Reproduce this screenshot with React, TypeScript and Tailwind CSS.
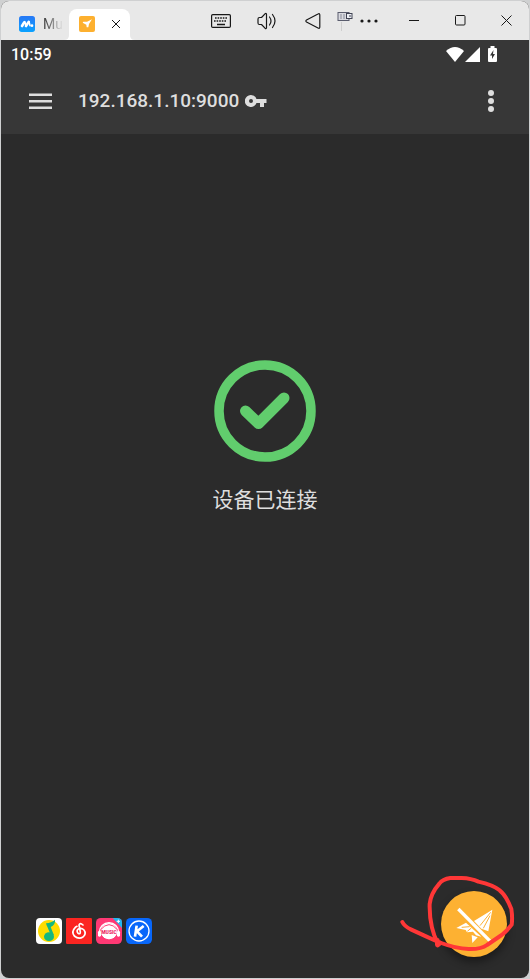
import React from "react";

function MumuLogo() {
  return (
    <svg viewBox="0 0 48 48" className="size-4 shrink-0" aria-hidden="true">
      <defs>
        <linearGradient id="mumu" x1="0" y1="0" x2="0" y2="1">
          <stop offset="0" stopColor="#2878f5" />
          <stop offset="1" stopColor="#0aa2ff" />
        </linearGradient>
      </defs>
      <rect width="48" height="48" rx="8" fill="url(#mumu)" />
      <path d="M9 30 16 19M21 30 29 18" stroke="white" strokeWidth="8" strokeLinecap="round" fill="none" />
      <path d="M17 17 21 28M30 17 33 29" stroke="white" strokeWidth="5" strokeLinecap="round" />
      <circle cx="39" cy="29" r="4" fill="white" />
    </svg>
  );
}

function PlaneLogo() {
  return (
    <svg viewBox="0 0 48 48" className="size-4 shrink-0" aria-hidden="true">
      <rect width="48" height="48" rx="6" fill="#fdb02f" />
      <path d="M39 10 30 24 28 34 23 34 22 26 11 20 13 17 24 17Z" fill="white" />
    </svg>
  );
}

function TitleBar() {
  return (
    <header className="flex h-[39px] shrink-0 items-center bg-[#e8e8e8] text-[#181818]">
      <div className="flex h-full w-[68px] shrink-0 items-center gap-2 pt-[7px] pl-[18px]">
        <MumuLogo />
        <span className="w-5 overflow-hidden bg-linear-to-r from-[#333] to-[#e8e8e8] bg-clip-text text-sm text-transparent">Mu</span>
      </div>
      <div className="relative flex h-[31px] w-[61px] shrink-0 items-center justify-between self-end rounded-t-lg bg-white pr-[9px] pb-[2px] pl-[10px]">
        <svg viewBox="0 0 5 5" className="absolute bottom-0 -left-[5px] size-[5px]" aria-hidden="true"><path d="M5 0V5H0Q5 5 5 0" fill="white" /></svg>
        <svg viewBox="0 0 5 5" className="absolute -right-[5px] bottom-0 size-[5px]" aria-hidden="true"><path d="M0 0V5H5Q0 5 0 0" fill="white" /></svg>
        <PlaneLogo />
        <button type="button" aria-label="关闭标签" className="flex">
          <svg viewBox="0 0 10 10" className="size-[10px]" stroke="currentColor"><path d="M1 1 9 9M9 1 1 9" /></svg>
        </button>
      </div>
      <div className="ml-auto flex h-full items-center">
        <button type="button" aria-label="键盘" className="flex w-[46px] justify-center">
          <svg viewBox="0 0 20 14" className="h-[14px] w-5" fill="none" stroke="currentColor">
            <rect x=".6" y=".6" width="18.8" height="12.8" rx="1.2" strokeWidth="1.2" />
            <path d="M4 4H17M3 7H16" strokeWidth="1.6" strokeDasharray="1.6 1" />
            <path d="M6 10.5H14" strokeWidth="1.3" />
          </svg>
        </button>
        <button type="button" aria-label="音量" className="flex w-[46px] justify-center">
          <svg viewBox="0 0 20 18" className="h-[18px] w-5" fill="none" stroke="currentColor" strokeWidth="1.2" strokeLinejoin="round" strokeLinecap="round">
            <path d="M2.5 5.5H4.5L8 1.8Q9.5.7 9.5 2.5V15.5Q9.5 17.3 8 16.2L4.5 12.5H2.5Q1 12.5 1 11V7Q1 5.5 2.5 5.5ZM12.5 5Q15.5 9 12.5 13M15.5 2.5Q20.5 9 15.5 15.5" />
          </svg>
        </button>
        <button type="button" aria-label="返回" className="flex w-[46px] justify-center">
          <svg viewBox="0 0 16 16" className="size-4" fill="none" stroke="currentColor" strokeWidth="1.2" strokeLinejoin="round"><path d="M13 1Q14.8 0 14.8 2V14Q14.8 16 13 15L1.5 9Q.2 8 1.5 7Z" /></svg>
        </button>
        <button type="button" aria-label="连接" className="flex w-[18px] justify-center">
          <svg viewBox="0 0 16 20" className="h-5 w-4" fill="none">
            <rect x="1" y="1.5" width="11" height="8" fill="#d8d9df" stroke="#5a5d6e" />
            <path d="M4 3V8M7 3V8" stroke="#888b9a" />
            <rect x="9.5" y="2.5" width="5.5" height="5" fill="#eceef4" stroke="#3f4252" />
            <path d="M12 5H14" stroke="#3f4252" />
            <path d="M4.5 11V20" stroke="#cfcfcf" />
          </svg>
        </button>
        <button type="button" aria-label="更多" className="flex w-[30px] justify-center">
          <svg viewBox="0 0 18 4" className="h-1 w-[18px]" fill="currentColor"><circle cx="2" cy="2" r="1.6" /><circle cx="9" cy="2" r="1.6" /><circle cx="16" cy="2" r="1.6" /></svg>
        </button>
        <button type="button" aria-label="最小化" className="ml-[7px] flex w-[46px] justify-center">
          <svg viewBox="0 0 10 10" className="size-[10px]" stroke="currentColor"><path d="M0 4.5H10" /></svg>
        </button>
        <button type="button" aria-label="最大化" className="flex w-[46px] justify-center">
          <svg viewBox="0 0 11 11" className="size-[11px]" fill="none" stroke="currentColor"><rect x=".5" y=".5" width="9.5" height="9.5" rx="1" /></svg>
        </button>
        <button type="button" aria-label="关闭" className="flex w-[46px] justify-center">
          <svg viewBox="0 0 11 11" className="size-[11px]" stroke="currentColor"><path d="M.5.5 10.5 10.5M10.5.5.5 10.5" /></svg>
        </button>
      </div>
    </header>
  );
}

function StatusBar() {
  return (
    <div className="flex h-7 items-center justify-between pr-8 pl-[10px] text-white">
      <time className="pt-px text-base font-medium">10:59</time>
      <div className="flex items-center">
        <svg viewBox="0 0 18 15" className="h-[15px] w-[18px]" fill="white"><path d="M0 4Q9-4 18 4L9 15Z" /></svg>
        <svg viewBox="0 0 15 15" className="ml-px size-[15px]" fill="white"><path d="M0 15H15V0Z" /></svg>
        <svg viewBox="0 0 9 16" className="ml-2 h-4 w-[9px]"><path d="M2.5 0H6.5V2H8Q9 2 9 3V15Q9 16 8 16H1Q0 16 0 15V3Q0 2 1 2H2.5Z" fill="white" /><path d="M5.5 4 2 9.5H4V13L7 8H5Z" fill="#373737" /></svg>
      </div>
    </div>
  );
}

function AppBar() {
  return (
    <div className="flex h-[66px] items-center px-7 text-[#dedede]">
      <button type="button" aria-label="菜单" className="flex">
        <svg viewBox="0 0 23 16" className="h-4 w-[23px]" fill="currentColor"><path d="M0 .5H23V3H0ZM0 7H23V9.5H0ZM0 13.5H23V16H0Z" /></svg>
      </button>
      <h1 className="ml-[26px] text-[19px] leading-6 font-medium">192.168.1.10:9000</h1>
      <svg viewBox="0 0 22 12" className="ml-[6px] h-3 w-[22px]" fill="currentColor" aria-hidden="true">
        <path fillRule="evenodd" d="M6 0A6 6 0 1 0 11.5 8H15V12H19V8H21.5V4H11.5A6 6 0 0 0 6 0ZM6 4A2 2 0 1 1 6 8A2 2 0 0 1 6 4Z" />
      </svg>
      <button type="button" aria-label="更多选项" className="ml-auto flex w-5 justify-center">
        <svg viewBox="0 0 6 22" className="h-[22px] w-[6px]" fill="currentColor"><circle cx="3" cy="3" r="3" /><circle cx="3" cy="11" r="3" /><circle cx="3" cy="19" r="3" /></svg>
      </button>
    </div>
  );
}

function MusicApps() {
  return (
    <div className="flex gap-1">
      <button type="button" aria-label="QQ音乐">
        <svg viewBox="0 0 78 78" className="size-[26px]">
          <rect width="78" height="78" rx="12" fill="white" />
          <circle cx="39" cy="39" r="33" fill="#ffdc00" />
          <path d="M30 16Q46 15 57 5Q59 20 44 27L54 52 44 50 34 26Q31 22 30 16Z" fill="#15b77f" />
          <ellipse cx="39" cy="56" rx="15" ry="13" fill="#15b77f" />
        </svg>
      </button>
      <button type="button" aria-label="网易云音乐">
        <svg viewBox="0 0 78 78" className="size-[26px]">
          <rect width="78" height="78" rx="4" fill="#fb2521" />
          <path d="M51 21Q42 13 39 21L43 42Q43 50 36 46Q30 38 37 33Q46 28 54 36Q62 47 51 57Q38 65 25 54Q15 41 28 28L33 25" fill="none" stroke="white" strokeWidth="5" strokeLinecap="round" strokeLinejoin="round" />
        </svg>
      </button>
      <button type="button" aria-label="Music">
        <svg viewBox="0 0 78 78" className="size-[26px]">
          <rect width="78" height="78" rx="14" fill="#ff3974" />
          <path d="M50 0H64Q78 0 78 14V30Z" fill="#20b8f0" />
          <path d="M67 5V15M62 10H72" stroke="white" strokeWidth="3" />
          <circle cx="39" cy="40" r="25" fill="white" />
          <path d="M10 43A29 29 0 0 1 68 43" fill="none" stroke="white" strokeWidth="4" />
          <rect x="6" y="39" width="9" height="17" rx="4" fill="white" />
          <rect x="63" y="39" width="9" height="17" rx="4" fill="white" />
          <path d="M14 35Q39 5 64 35M15 53Q39 79 63 53" fill="none" stroke="#ff3974" strokeWidth="3" />
          <text x="39" y="49" textAnchor="middle" fontSize="15" fontWeight="900" fill="#ed2866">MUSIC</text>
        </svg>
      </button>
      <button type="button" aria-label="酷狗音乐">
        <svg viewBox="0 0 78 78" className="size-[26px]">
          <rect width="78" height="78" rx="14" fill="#0867fa" />
          <circle cx="39" cy="39" r="30" fill="none" stroke="white" strokeWidth="4" />
          <path d="M32 23 27 56M53 24 33 40 48 56" fill="none" stroke="white" strokeWidth="8" />
        </svg>
      </button>
    </div>
  );
}

export default function App() {
  return (
    <div className="flex min-h-screen bg-[#cfd0d1] font-[Roboto,'Noto_Sans_CJK_SC',sans-serif]">
      <div className="relative m-px flex flex-1 flex-col overflow-hidden rounded-lg bg-[#2b2b2b]">
        <TitleBar />
        <div className="bg-[#373737]">
          <StatusBar />
          <AppBar />
        </div>
        <main className="flex flex-1 flex-col">
          <section className="flex flex-col items-center pt-[226px]">
            <svg viewBox="0 0 102 102" className="size-[102px]" fill="none" stroke="#61cd6d" aria-hidden="true">
              <circle cx="51" cy="51" r="46" strokeWidth="9.5" />
              <path d="M31.5 51 44.5 63.5 70 38" strokeWidth="11" strokeLinecap="round" strokeLinejoin="round" />
            </svg>
            <p className="mt-[22px] text-[21px] leading-8 text-[#dedede]">设备已连接</p>
          </section>
          <footer className="mt-auto flex pb-[34px] pl-[35px]">
            <MusicApps />
          </footer>
        </main>
        <button type="button" aria-label="断开连接" className="absolute right-[22px] bottom-[21px] size-[66px] rounded-full bg-[#fdb132] shadow-[0_5px_9px_rgba(0,0,0,0.4)]">
          <svg viewBox="0 0 198 198" className="size-full">
            <path d="M154 56 99 90 121 113 142 121ZM46 111 75 95 121 137 105 133 96 122 78 124 74 117Z" fill="white" />
            <path d="M92 132 110 139 94 156Z" fill="white" />
            <path d="M149 64 117 104M147 74 127 112M62 109 86 107M79 121 91 111" stroke="#fdb132" strokeWidth="3" />
            <path d="M52 54 148 151" stroke="white" strokeWidth="10" />
          </svg>
        </button>
        <svg viewBox="0 0 420 342" className="pointer-events-none absolute -right-px -bottom-px h-[114px] w-[140px]" fill="none" stroke="#ff3737" strokeLinecap="round" strokeLinejoin="round" aria-hidden="true">
          <path d="M37 171Q43 184 64 194Q105 213 145 231Q198 251 236 252Q274 253 291 240L335 210Q351 198 365 179Q368 157 364 132Q349 92 329 76Q310 60 265 50Q244 40 215 39L181 39Q158 42 148 56Q122 86 119 117Q118 156 126 188Q131 212 145 238" strokeWidth="12" />
          <path d="M142 226V239M150 234 143 240" strokeWidth="14" />
        </svg>
      </div>
    </div>
  );
}
